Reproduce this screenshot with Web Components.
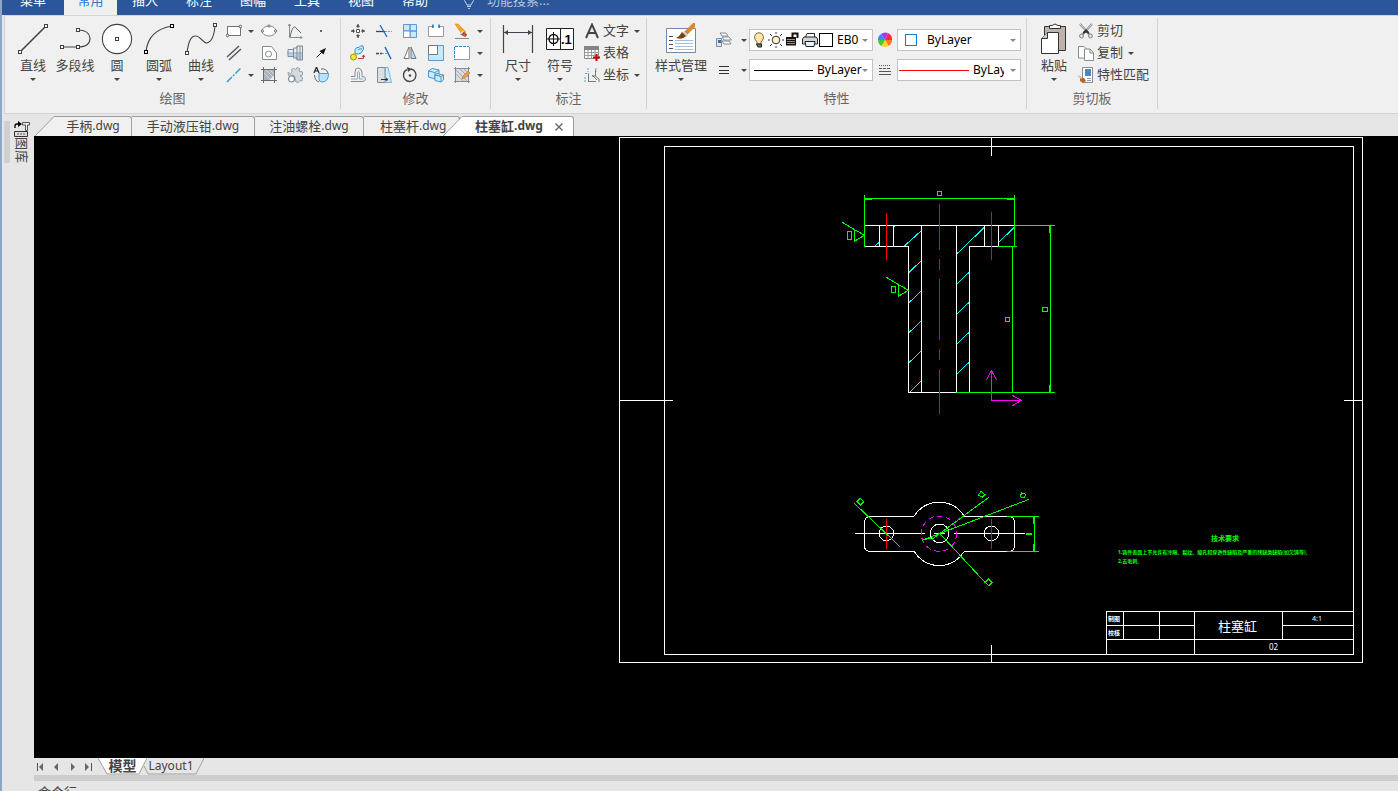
<!DOCTYPE html>
<html lang="zh-CN">
<head>
<meta charset="utf-8">
<title>CAD</title>
<style>
body{margin:0;font:13px/16px "Noto Sans","Noto Sans CJK SC",sans-serif;color:#444;background:#e6e6e6}
</style>
</head>
<body>
<cad-app></cad-app>
<script>
const pt=(x,y,c='#3b3f46')=>`<rect x="${x-1.5}" y="${y-1.5}" width="3" height="3" fill="#fff" stroke="${c}"/>`;
const D='#3f444c',G='#858b94',B='#3c8fd0',L='#c9ecff';
const ICONS={
line:[32,`<path d="M3 29L29 3" stroke="${D}" stroke-width="1.6"/>${pt(29,3)}${pt(3,29)}`],
pline:[32,`<path d="M3 24H19Q31 24 31 15Q30 7 19 7" fill="none" stroke="${D}" stroke-width="1.2"/>${pt(3,24)}${pt(19,24)}${pt(19,7)}`],
circle:[32,`<circle cx="16" cy="16" r="14.6" fill="#fff" stroke="${D}" stroke-width="1.1"/>${pt(16,16)}`],
arc:[32,`<path d="M3 29Q5 7 29 3" fill="none" stroke="${D}" stroke-width="1.2"/>${pt(29,3,'#000')}${pt(3,29,'#000')}`],
curve:[32,`<path d="M2 30Q4 12 11 13C15 13 18 20 22 20Q29 18 30 2" fill="none" stroke="${D}" stroke-width="1.1"/>${pt(30,2)}${pt(2,30)}`],
rect:[16,`<rect x="1.5" y="3.500" width="13" height="9" fill="#fff" stroke="#70757c"/><circle cx="14.500" cy="3.500" r="1.300" fill="#fff" stroke="${D}" stroke-width=".8"/><circle cx="1.500" cy="12.500" r="1.300" fill="#fff" stroke="${D}" stroke-width=".8"/>`],
dline:[16,`<path d="M1 12L13 1M3 15L15 4" stroke="#555a61" stroke-width="1.5"/>`],
cline:[16,`<path d="M1 15L15 1" stroke="#1e9fdc" stroke-width="1.4" stroke-dasharray="7 1.500 2 1.500"/>`],
ellipse:[16,`<ellipse cx="8" cy="8" rx="7" ry="5" fill="#fff" stroke="${G}"/><g fill="#fff" stroke="#444" stroke-width=".7"><circle cx="1.500" cy="8" r="1.100"/><circle cx="14.500" cy="8" r="1.100"/><circle cx="8" cy="3" r="1.100"/></g>`],
polyg:[16,`<path d="M1.500 1.500H10.500L15.500 8V14.500H1.500Z" fill="#fff" stroke="${G}"/><circle cx="7.500" cy="9" r="3" fill="#fff" stroke="${G}"/>`],
hatch:[16,`<path d="M2.500 2.500H13.500V8L8 13.500H2.500Z" fill="#aeb3b9"/><path d="M3 6L9 12M5 3L12 10M9 3L13 7" stroke="#dfe2e5" stroke-width=".7"/><path d="M2.500 0V16M13.500 0V16M0 2.500H16M0 13.500H16" stroke="#666c74"/>`],
graph:[16,`<path d="M2.500 1V14.500H15M1 3L2.500 1 4 3M13.500 13L15 14.500 13.500 16" fill="none" stroke="${G}"/><path d="M3 14C5 5 7 2 9 5L14 10" fill="none" stroke="#5c6168"/>`],
bolt:[16,`<path d="M1 4.500H6.500V3H10V1H15.500V15H10V13H6.500V11.500H1Z" fill="#e9edf2"/><path d="M1 9H15.500V15H10V13H6.500V11.500H1Z" fill="#b5d3ee"/><path d="M0 8H16" stroke="#6fa5d8"/><path d="M1 4.500H6.500V3H10V1H15.500V15H10V13H6.500V11.500H1ZM6.500 3V13M10 1V15M13 1V15" fill="none" stroke="${G}"/>`],
gear:[16,`<path d="M5 5L4.500 2.500 6.500 1 8.500 3 10 .500 12.500 1.500 12 4 15.500 5V8L13 9 15.500 10.500 15 14 12.500 13.500 11.500 15.500 9 15 8.500 12 7 8.500 3.500 8 1.500 8.500 1 5.500 3.500 6.500Z" fill="#d4dae2" stroke="#9aa1aa"/><circle cx="4.500" cy="12" r="3" fill="#fff" stroke="${G}" stroke-width="1.200"/>`],
dot:[16,`<rect x="7" y="7" width="2" height="2" fill="#666"/>`],
arrow:[16,`<path d="M3.500 12.500L9 7" stroke="#222" stroke-width="1"/><path d="M13 3L10.500 9.500 6.500 6Z" fill="#111"/>`],
aspin:[16,`<path d="M6 6.500H15.500Q15.500 15 9 15Q6 15 6 12Z" fill="#b9e2fa" stroke="#4d9bd0"/><path d="M1.500 8Q2 14 6 15M15 6Q13 1 8 2" fill="none" stroke="#666"/><path d="M1 6L3.500 0L6 6M2 4H5" fill="none" stroke="#222" stroke-width="1.200"/>`],
move:[16,`<path d="M6.500 6.500H9.500V9.500H6.500Z" fill="#fff" stroke="#555"/><path d="M1 8H5M11 8H15M8 1V5M8 11V15" stroke="${D}"/><path d="M1 8L4 6V10ZM15 8L12 6V10ZM8 1L6 4H10ZM8 15L6 12H10Z" fill="#555"/>`],
trim:[16,`<path d="M0 8.500H9" stroke="#445" stroke-width="1.300"/><path d="M9 8.500H16" stroke="#5da6e0" stroke-dasharray="2 1"/><path d="M4 2L11 14" stroke="#1f6fbf" stroke-width="1.300"/>`],
array:[16,`<g stroke="#5b9bd0"><path d="M1.500 1.500H8V8H1.500ZM8 1.500H14.500V8H8ZM8 8H14.500V14.500H8Z" fill="#c5eaff"/><path d="M1.500 8H8V14.500H1.500Z" fill="#fff"/></g>`],
brk:[16,`<path d="M4 3.500H.500V13.500H15.500V3.500H12" fill="#fff"/><path d="M4 3.500H.500V13.500H15.500V3.500H12" fill="none" stroke="#999"/><path d="M4 3.500H5.500M5 1.500V5M12 3.500H10.500M11 1.500V5" stroke="#1f6fbf" stroke-width="1.500"/>`],
eraser:[16,`<path d="M1 1L4 1 12 9 8.500 12Z" fill="#f5a623" stroke="#d98a1c" stroke-width=".6"/><path d="M9 8L13 11.500Q12.500 15 9 13L6 11Z" fill="#b0503a"/><path d="M9.500 8L6.500 11" stroke="#dfe5ea" stroke-width="1.500"/><path d="M1 15.500H15" stroke="#888"/>`],
copyobj:[16,`<circle cx="3.500" cy="12" r="3" fill="#ffe52d" stroke="#a88c00"/><path d="M5 6Q5 2 9 2.500Q10 0 13 1Q15 4 11 8Q8 9 7 9Q4 9 5 6Z" fill="${L}" stroke="${B}"/><path d="M8 5Q10 3 12 4" fill="none" stroke="${B}"/><path d="M8 13.500H13.500V10M12 12L13.500 10 15 12" fill="none" stroke="#b04030"/>`],
extend:[16,`<path d="M0 8.500H6" stroke="#445" stroke-width="1.500" stroke-dasharray="3 1"/><path d="M6 8.500H11" stroke="#5da6e0" stroke-dasharray="2 1"/><path d="M9 2L15 14" stroke="#1f6fbf" stroke-width="1.500"/>`],
mirror:[16,`<path d="M7 2V13.500H2Z" fill="#fff" stroke="#777"/><path d="M9 2V13.500H14Z" fill="#bcdcf5" stroke="#777"/>`],
scale:[16,`<path d="M.500 .500H15.500V15.500H.500Z" fill="#c5eaff" stroke="#5b9bd0"/><path d="M.500 .500H9.500V9.500H.500Z" fill="#fff" stroke="#777"/>`],
region:[16,`<path d="M.500 1.500H15.500V14.500H.500Z" fill="#fff"/><path d="M15.500 2V14.500H1" fill="none" stroke="#999"/><path d="M1 1.500H15M.500 2V15" stroke="${B}" stroke-dasharray="3 1"/>`],
offset:[16,`<path d="M1 14.500H12Q15.500 14.500 15.500 12Q15.500 9.500 12 9.500V5Q11 1 8 1Q5 1 5 5V9.500H1" fill="none" stroke="${G}"/><path d="M1 12H7.500V5Q8.500 3.500 9.500 5V12H13" fill="none" stroke="#69b5ec"/>`],
stretch:[16,`<path d="M9 .500H12L15.500 15.500H9Z" fill="${L}" stroke="#5b9bd0" stroke-width=".7"/><path d="M1.500 .500H9V15.500H1.500Z" fill="#dcdfe2" stroke="${G}"/><path d="M5 12.500H12M10 11L12 12.500 10 14" fill="none" stroke="#333"/>`],
rotate:[16,`<path d="M9 2A6.300 6.300 0 1 1 5 2.500" fill="none" stroke="#444" stroke-width="1.400"/><path d="M5 0L10 2 6 5Z" fill="#444"/><circle cx="8" cy="8.500" r="1.200" fill="#444"/>`],
solid:[16,`<g fill="${L}" stroke="#4b93c8"><path d="M.500 4L4 1.500 11 3V10L7 12 .500 10ZM.500 4L7 5.500 11 3M7 5.500V12"/><path d="M7 8L9 6.500 15.500 8V13L13 15 7 13.500ZM7 8L13 9.500 15.500 8M13 9.500V15"/></g>`],
hatchedit:[16,`<path d="M1.500 1.500H14.500V14.500H1.500Z" fill="#d8dadd" stroke="${G}"/><path d="M2 7L9 14M2 3L13 14M6 2L14 10M10 2L14 6" stroke="#9ba1a8" stroke-width=".8"/><path d="M0 1.500H16M0 14.500H16M1.500 0V16M14.500 0V16" stroke="${G}"/><path d="M8 12L9 9 14 4 16 6 11 11Z" fill="#f0a030" stroke="#a66" stroke-width=".5"/>`],
dim:[32,`<path d="M1.500 2V30M30.500 2V30M2 9.500H30" stroke="${D}" stroke-width="1.200"/><path d="M2 9.500L6 7V12ZM30 9.500L26 7V12Z" fill="${D}"/>`],
sym:[32,`<path d="M2.500 5.500H29.500V26.500H2.500ZM16.500 5.500V26.500" fill="#fff" stroke="#222"/><circle cx="9.500" cy="16" r="4.500" fill="none" stroke="#111" stroke-width="1.400"/><path d="M3 16H16M9.500 9V23" stroke="#111"/><text x="17" y="21" font-family="Liberation Sans" font-weight="bold" font-size="13" fill="#000">.1</text>`],
textA:[16,`<path d="M2 15L8 1.500 14 15M4.500 10H11.500" fill="none" stroke="#444" stroke-width="1.900"/>`],
table:[16,`<path d="M.500 1.500H14.500V13.500H.500Z" fill="#fff" stroke="#888"/><path d="M0 1H15V5H0Z" fill="#7d848c"/><path d="M0 7.500H15M0 10.500H15M4 5V13M7.500 5V13M11 5V13" stroke="#999"/><path d="M12.500 9V16M9 12.500H16" stroke="#c00" stroke-width="2"/>`],
coord:[16,`<path d="M4 1V5M12 1V5M1 6.500H5M1 10V15" stroke="#5aa0d0" stroke-dasharray="2 1"/><path d="M4.500 7V15M4 14.500H12M8 8L13 13M11.500 3V9L15 12V15M8 9H12" fill="none" stroke="#777"/>`],
style:[32,`<path d="M1.500 5.500H30.500V29.500H1.500Z" fill="#fff" stroke="#6f8aa8"/><path d="M4 13.500H8M4 17.500H8M4 21.500H8M4 25.500H8" stroke="#30507a"/><path d="M10 17.500H28M10 20.500H28M10 23.500H28M10 26.500H28" stroke="#a9bcd6" stroke-width="1.200"/><path d="M19 9L28 0H30V4L22 12Z" fill="#d7892f"/><path d="M19 8L23 12 21 14 17 10Z" fill="#cfd4da"/><path d="M17 9L21 13Q18 17 11 15Q15 13 17 9Z" fill="#774317"/>`],
layers:[16,`<path d="M4 1H10L12 4H6ZM6 5H13L15.500 8H8ZM6 9H13L15 12H8Z" fill="#fff" stroke="${G}"/><path d="M.500 6.500H5.500V14.500H.500Z" fill="#dbe7f2" stroke="${G}"/><rect x="2" y="8" width="3" height="3" fill="#3475b5"/>`],
lines:[16,`<path d="M3 4.500H13M3 8.500H13M3 11.500H13" stroke="#333"/>`],
bulb:[16,`<path d="M6 10Q2 6 4.500 2.500Q8 -1 11.500 2.500Q14 6 10 10V12H6Z" fill="#ffe9a8" stroke="#7b6540"/><path d="M5.500 12H10.500V15H7Z" fill="#777" stroke="#222"/>`],
sun:[16,`<circle cx="8" cy="8" r="3.800" fill="#fff3cf" stroke="#333"/><path d="M8 0V2M8 14V16M0 8H2M14 8H16M2 2L4 4M12 12L14 14M2 14L4 12M12 4L14 2" stroke="#333"/>`],
lock:[16,`<path d="M7.500 6V1.500H12.500V6" fill="none" stroke="#111" stroke-width="2"/><path d="M1 5H11V13.500H1Z" fill="#111"/><path d="M2 7.500H10M2 9.500H10M2 11.500H10" stroke="#a6a022"/>`],
printer:[16,`<path d="M3.500 5L5 1.500H12.500V5" fill="#fff" stroke="#222"/><path d="M2 5H14L15.500 7V12H.500V7Z" fill="#d3d6d9" stroke="#222"/><path d="M3 9.500H13L12 14.500H4Z" fill="#dff5fa" stroke="#222"/>`],
wheel:[16,`<path d="M8 8L1 8A7 7 0 0 1 4 2Z" fill="#388bff"/><path d="M8 8L4 2A7 7 0 0 1 11 1Z" fill="#9c3cff"/><path d="M8 8L11 1A7 7 0 0 1 15 8Z" fill="#f52b45"/><path d="M8 8L15 8A7 7 0 0 1 11.500 14Z" fill="#ff7d20"/><path d="M8 8L11.500 14A7 7 0 0 1 4.500 14Z" fill="#ffd52e"/><path d="M8 8L4.500 14A7 7 0 0 1 1 8Z" fill="#49c931"/>`],
ltype:[16,`<path d="M2 3.500H14" stroke="#555" stroke-dasharray="1 1"/><path d="M2 6.500H14" stroke="#555" stroke-dasharray="3 1"/><path d="M2 9.500H14M2 12.500H14" stroke="#555"/>`],
paste:[32,`<path d="M6.500 3.500H27.500V27.500H6.500Z" fill="#bdb3aa" stroke="#333"/><path d="M11.500 2.500H14Q17 -.500 20 2.500H22.500V5.500H11.500Z" fill="#fff" stroke="#333"/><path d="M9.500 9.500H20.500V30.500H3.500V15.500Z" fill="#fff" stroke="#333"/><path d="M9.500 9.500V15.500H3.500" fill="#ccc" stroke="#333"/>`],
cut:[16,`<path d="M2 1L12 12M14 1L4 12" stroke="${G}" stroke-width="2.200"/><path d="M2 1L12 12M14 1L4 12" stroke="#eee" stroke-width=".8"/><path d="M5 9L8 6 11 9V11L8 9.500 5 11Z" fill="#333"/><circle cx="3.500" cy="13" r="2" fill="#ddd" stroke="${G}"/><circle cx="12.500" cy="13" r="2" fill="#ddd" stroke="${G}"/>`],
copy:[16,`<path d="M.500 1.500H6L9 4.500V13H.500Z" fill="#fff" stroke="${G}"/><path d="M6.500 4H12L15.500 8V15.500H6.500Z" fill="#fff" stroke="${G}"/><path d="M12 4V8H15.500" fill="none" stroke="${G}"/>`],
match:[16,`<path d="M4.500 .500H14.500V15.500H4.500Z" fill="#fff" stroke="#889"/><path d="M7 2H13V9H7Z" fill="#4c87c0"/><path d="M9 11.500H13M9 13.500H13" stroke="#89a"/><path d="M2 10L6 11 8 14 5 16 2 14Z" fill="#b76425"/><path d="M0 9L4 11" stroke="#ccc" stroke-width="2"/>`],
tip:[16,`<path d="M5 10Q1 5 5 2Q8 0 11 2Q15 5 11 10L10 12H6Z" fill="none" stroke="#c3d0e8"/><path d="M6 13.500H10M7 15.500H9" stroke="#c3d0e8"/>`],
lib:[16,`<path d="M1 7V5Q1 3 3 3H5" fill="none" stroke="#000" stroke-width="1.300"/><path d="M4 0L8 3 4 6Z"/><path d="M8.500 1.500H15.500V4H13.500V9.500H11.500V4H8.500Z" fill="#eee" stroke="#555"/><path d="M.500 10.500H13.500V15.500H.500Z" fill="#ddd" stroke="#333"/><path d="M3 13H11" stroke="#555" stroke-dasharray="2 1"/>`],
close:[16,`<path d="M4.500 4.500L11.500 11.500M11.500 4.500L4.500 11.500" stroke="#666" stroke-width="1.400"/>`],
first:[16,`<path d="M3.500 4V12" stroke="#555"/><path d="M9 4V12L5 8Z" fill="#666"/>`],
prev:[16,`<path d="M8 4V12L4 8Z" fill="#666"/>`],next:[16,`<path d="M5 4V12L9 8Z" fill="#666"/>`],
last:[16,`<path d="M9.500 4V12" stroke="#555"/><path d="M3 4V12L7 8Z" fill="#666"/>`]
};
const make=(tag,fn)=>customElements.define(tag,class extends HTMLElement{
 connectedCallback(){if(this.shadowRoot)return;this.attachShadow({mode:'open'}).innerHTML=fn(this)}
});
const btn='button{font:inherit;color:inherit;background:none;border:0;padding:0;margin:0;display:flex;align-items:center;justify-content:center;white-space:nowrap}';

make('cad-icon',e=>{const [s,b]=ICONS[e.getAttribute('name')];
 return `<style>:host{display:block;flex:none}svg{display:block}</style><svg width="${s}" height="${s}" viewBox="0 0 ${s} ${s}" aria-hidden="true">${b}</svg>`});
make('drop-caret',()=>`<style>:host{display:block;flex:none;border:3px solid transparent;border-top-color:var(--caret,#444);border-bottom:0;width:0}</style>`);

make('big-tool',e=>`<style>:host{display:block;width:42px;flex:none}:host([wide]){width:56px}${btn}
button{flex-direction:column;width:100%;justify-content:flex-start;line-height:14px}
.i{height:38px;display:flex;align-items:center}drop-caret{margin-top:6px}</style>
<button><span class="i"><cad-icon name="${e.getAttribute('icon')}"></cad-icon></span><slot></slot>${e.hasAttribute('drop')?'<drop-caret></drop-caret>':''}</button>`);
make('mini-tool',e=>`<style>:host{display:block}${btn}button{width:100%;height:22px}</style>
<button aria-label="${e.getAttribute('label')}"><cad-icon name="${e.getAttribute('icon')}"></cad-icon></button>`);
make('caret-tool',e=>`<style>:host{display:block}${btn}button{width:100%;height:22px}</style><button aria-label="更多"><drop-caret></drop-caret></button>`);
make('row-tool',e=>`<style>:host{display:block}${btn}button{height:22px;gap:3px}span{padding-bottom:2px}drop-caret{margin-left:2px}</style>
<button><cad-icon name="${e.getAttribute('icon')}"></cad-icon><span><slot></slot></span>${e.hasAttribute('drop')?'<drop-caret></drop-caret>':''}</button>`);

make('ribbon-group',e=>`<style>:host{display:flex;flex-direction:column;box-sizing:border-box;border-right:1px solid #d4d4d4;margin:2px 0 4px;flex:none}
.t{display:flex;align-items:flex-start;box-sizing:border-box;height:69px;padding:2px 0 0 var(--pad,6px)}
.l{text-align:center;color:#666;margin-top:3px;line-height:16px;padding-bottom:3px}</style>
<div class="t"><slot></slot></div><div class="l">${e.getAttribute('label')}</div>`);
make('tool-grid',e=>`<style>:host{display:grid;grid-template-columns:${e.getAttribute('cols')};grid-auto-rows:22px}</style><slot></slot>`);

make('menu-bar',()=>`<style>:host{display:block;background:#2b579a;color:#fff;height:15px;overflow:hidden}
nav{display:flex;align-items:flex-end;height:15px}
a{flex:none;color:inherit;text-decoration:none;width:54px;height:28px;line-height:26px;text-align:center}
a:first-child{width:62px}a.on{background:#f0f0f0;color:#2b78d0;width:53px;margin-right:1px}
label{display:flex;align-items:center;gap:10px;height:28px;margin-left:19px}
input{border:0;background:none;font:inherit;width:160px;padding:0 0 2px;color:#fff}input::placeholder{color:#b3c3de;opacity:1}</style>
<nav><a href="#">菜单</a><a href="#" class="on">常用</a><a href="#">插入</a><a href="#">标注</a><a href="#">图幅</a><a href="#">工具</a><a href="#">视图</a><a href="#">帮助</a>
<label><cad-icon name="tip"></cad-icon><input type="search" aria-label="功能搜索" placeholder="功能搜索..."></label></nav>`);

make('prop-combo',e=>`<style>:host{display:flex;align-items:center;box-sizing:border-box;width:124px;height:22px;border:1px solid #c3c3c3;background:#fff;padding:0 4px 0 1px;--caret:#888}
select{appearance:none;border:0;padding:0;margin:0 0 0 4px;background:none;flex:1;min-width:0;font:12px/20px "Noto Sans","Noto Sans CJK SC",sans-serif;color:#000;height:20px}
:host([clip]) select{margin-right:6px}
::slotted(cad-icon){margin-right:1px}</style><slot></slot><select aria-label="${e.getAttribute('label')}"><option>${e.getAttribute('value')}</option></select><drop-caret></drop-caret>`);
make('line-swatch',()=>`<style>:host{display:block;flex:none;width:var(--w);height:1px;background:var(--c);margin-left:var(--m)}</style>`);
make('box-swatch',()=>`<style>:host{display:block;flex:none;box-sizing:border-box;width:var(--w);height:var(--w);border:1px solid var(--c);background:#fff;margin:0 var(--m)}</style>`);

make('cad-ribbon',()=>{
const m=(i,l)=>`<mini-tool icon="${i}" label="${l}"></mini-tool>`,c='<caret-tool></caret-tool>',s='<span></span>';
return `<style>:host{display:flex;background:#f0f0f0;border:1px solid #d4d4d4;border-right:0;margin-left:2px;overflow:hidden}
.g1{--pad:7px;width:336px}.g2{--pad:4px;width:150px}.g3{width:156px}.g4{width:380px}.g5{width:131px}
.list{display:block;margin-left:3px}
.props{display:grid;grid-template-columns:30px 10px 124px 24px 124px;row-gap:8px;padding-top:9px;align-items:center}</style>
<ribbon-group class="g1" label="绘图"><big-tool icon="line" drop>直线</big-tool><big-tool icon="pline">多段线</big-tool><big-tool icon="circle" drop>圆</big-tool><big-tool icon="arc" drop>圆弧</big-tool><big-tool icon="curve" drop>曲线</big-tool>
<tool-grid cols="24px 10px 26px 26px 26px">${m('rect','矩形')+c+m('ellipse','椭圆')+m('graph','公式曲线')+m('dot','点')+m('dline','平行线')+s+m('polyg','轮廓')+m('bolt','孔轴')+m('arrow','箭头')+m('cline','中心线')+c+m('hatch','剖面线')+m('gear','齿轮')+m('aspin','局部放大')}</tool-grid></ribbon-group>
<ribbon-group class="g2" label="修改"><tool-grid cols="26px 26px 26px 26px 26px 10px">${m('move','平移')+m('trim','裁剪')+m('array','阵列')+m('brk','打断')+m('eraser','删除')+c+m('copyobj','平移复制')+m('extend','延伸')+m('mirror','镜像')+m('scale','缩放')+m('region','分解')+c+m('offset','等距')+m('stretch','拉伸')+m('rotate','旋转')+m('solid','块')+m('hatchedit','编辑剖面线')+c}</tool-grid></ribbon-group>
<ribbon-group class="g3" label="标注"><big-tool icon="dim" drop>尺寸</big-tool><big-tool icon="sym" drop>符号</big-tool><div class="list"><row-tool icon="textA" drop>文字</row-tool><row-tool icon="table">表格</row-tool><row-tool icon="coord" drop>坐标</row-tool></div></ribbon-group>
<ribbon-group class="g4" label="特性"><big-tool icon="style" drop wide>样式管理</big-tool>
<div class="props">${m('layers','图层')+c}<prop-combo label="图层" value="EB0"><cad-icon name="bulb"></cad-icon><cad-icon name="sun"></cad-icon><cad-icon name="lock"></cad-icon><cad-icon name="printer"></cad-icon><box-swatch style="--w:14px;--c:#000;--m:0px"></box-swatch></prop-combo>${m('wheel','颜色')}<prop-combo label="颜色" value="ByLayer"><box-swatch style="--w:12px;--c:#1a78d6;--m:6px"></box-swatch></prop-combo>
${m('lines','线宽')+c}<prop-combo label="线宽" value="ByLayer"><line-swatch style="--w:59px;--c:#000;--m:3px"></line-swatch></prop-combo>${m('ltype','线型')}<prop-combo clip label="线型" value="ByLayer"><line-swatch style="--w:70px;--c:#f00;--m:0px"></line-swatch></prop-combo></div></ribbon-group>
<ribbon-group class="g5" label="剪切板"><big-tool icon="paste" drop>粘贴</big-tool><div class="list"><row-tool icon="cut">剪切</row-tool><row-tool icon="copy" drop>复制</row-tool><row-tool icon="match">特性匹配</row-tool></div></ribbon-group>`});

make('doc-tab',e=>{const sl=e.hasAttribute('slant'),on=e.hasAttribute('active');
return `<style>:host{display:flex;height:20px;flex:none;position:relative;--bg:${on?'#fff':'#f0f0f0'}}
svg{display:block;flex:none}${btn}.b{display:flex;align-items:center;border-top:1px solid #a0a0a0;border-right:1px solid #a0a0a0;border-top-right-radius:3px;background:var(--bg);box-sizing:border-box;height:20px;flex:1;min-width:0;justify-content:${on?'flex-start':'center'};padding:0 8px 0 ${on?'12px':'8px'};gap:8px;${on?'font-weight:bold;':''}}
.n{padding-bottom:2px}
span{font-size:12px}:host([last]) .b{padding-right:0;justify-content:flex-start;padding-left:16px}.x{width:16px}</style>
${sl?'<svg width="20" height="20"><path d="M0 20L20 0V20Z" fill="var(--bg)"/><path d="M0 20L19 .5H20" fill="none" stroke="#a0a0a0"/></svg>':''}
<div class="b"><button class="n"><slot></slot><span>.dwg</span></button>${on?'<button class="x" aria-label="关闭"><cad-icon name="close"></cad-icon></button>':''}</div>`});
make('doc-tabs',()=>`<style>:host{display:flex;align-items:flex-end;height:22px;padding-left:1px}
.a{width:97px}.b{width:123px}.c{width:109px}.d{width:96px}.e{width:131px;margin-left:-17px}</style>
<doc-tab class="a" slant>手柄</doc-tab><doc-tab class="b">手动液压钳</doc-tab><doc-tab class="c">注油螺栓</doc-tab><doc-tab class="d" last>柱塞杆</doc-tab><doc-tab class="e" slant active>柱塞缸</doc-tab>`);

make('side-dock',()=>`<style>:host{display:flex;align-items:flex-start;width:32px;flex:none;padding-top:7px;box-sizing:border-box}
i{width:6px;height:42px;background:#d0d0d0;margin:0 4px 0 2px}${btn}button{flex-direction:column}
span{writing-mode:vertical-rl;text-orientation:sideways;line-height:14px}</style>
<i></i><button><cad-icon name="lib"></cad-icon><span>图库</span></button>`);

make('drawing-canvas',()=>`<style>:host{display:block;background:#000;flex:1;min-height:0;overflow:hidden}
svg{display:block}
.w{stroke:#fff}.g{stroke:#0f0}.c{stroke:#0ff}.r{stroke:#f00}.m{stroke:#f0f}
path,circle{fill:none;shape-rendering:crispEdges}.z{stroke-width:3}
text{font-family:"Noto Sans","Noto Sans CJK SC",sans-serif}.b{font-weight:bold}</style>
<svg width="1364" height="622" viewBox="34 136 1364 622">
<path class="w" d="M619.5 137.5H1362.500V662.500H619.500ZM664.500 146.500H1353.500V654.500H664.500ZM991.500 137V156M991.500 645V662M619 400.500H673M1344 400.500H1362"/>
<path class="w" d="M1353 611.500H1106.500V654M1123.500 611V639M1159.500 611V639M1194.500 611V654M1282.500 611V639M1106 625.500H1194M1282 625.500H1353M1106 639.500H1353"/>
<g fill="#fff"><text class="b" x="1108" y="621" font-size="6">制图</text><text class="b" x="1108" y="635" font-size="6">校核</text><text x="1218" y="631" font-size="13">柱塞缸</text><text x="1312" y="621" font-size="7">4:1</text><text x="1269" y="650" font-size="8">02</text></g>
<g fill="#0f0" class="b"><text x="1211" y="541" font-size="7">技术要求</text><text x="1118" y="554" font-size="5">1.铸件表面上不允许有冷隔、裂纹、缩孔和穿透性缺陷及严重的残缺类缺陷(如欠铸等)。</text><text x="1118" y="563" font-size="5">2.去毛刺。</text></g>
<svg class="z" x="830" y="180" width="240" height="240" viewBox="0 0 720 720">
<path class="c" d="M237 277L273 243M237 368L273 333M237 458L273 423M237 548L273 513M240 637L273 603M380 222L463 142M380 313L417 277M380 403L417 367M380 493L417 457M380 583L417 547M222 199L273 153M133 199L148 187M190 140L197 136M506 187L553 142"/>
<path class="w" d="M104 136H554M104 199H235.500V637M148.500 136V199M190.500 136V199M274.500 136V637M379.500 136V637M463.500 136V199M505.500 136V199M505 199H418.500V637M235 637H380"/>
<path class="g" d="M103.500 45V200M553.500 45V199M104 55.500H554M104 58.500H126M531 58.500H554M553 136H675M505 199H561M547.500 199V637M661.500 136V637M658.500 138V159M658.500 615V636M378 637H675M322 34H335V47H322ZM526 412H539V425H526ZM637 382H653V395H637ZM52 154H65V179H52ZM184 319H197V338H184ZM37 127L103 166L73 184V149M169 292L235 331L205 349V313"/>
<path class="r" d="M169.500 99V240M328.500 72V210M328.500 237V270M328.500 297V480M328.500 507V540M328.500 567V702M484.500 96V240"/>
<path class="m" d="M484.500 661V571M469 600L484.500 572L500 600M484 661H575M547 646L574 661L547 677"/></svg>
<svg class="z" x="840" y="480" width="220" height="120" viewBox="0 0 660 360">
<path class="w" d="M45 160H255M282 160H315M342 160H555M222 109A88 88 0 0 1 373 109H507Q523 111 523 125V199Q522 214 507 214H373A88 88 0 0 1 222 214H90Q74 213 74 199V125Q75 110 90 109Z"/>
<circle class="w" cx="139" cy="160" r="22"/><circle class="w" cx="454" cy="160" r="22"/><circle class="w" cx="299" cy="160" r="28"/>
<circle class="m" cx="297" cy="161" r="53" stroke-dasharray="16 11"/>
<path class="r" d="M139.500 117V207M454.500 117V207"/>
<path class="g" d="M43 70L180 200M276 178L446 52M246 181L567 58M299 160L435 307M51 65L61 55L71 65L61 75ZM414 45L424 34L435 44L427 52ZM541 48L545 39L557 43L553 52L543 51ZM435 307L446 297L456 307L446 317ZM501 109H597M501 214H597M583.500 109V214M580.500 111V132M580.500 192V213M558 160H575M558 163H575M246 181L272 174M276 178L299 160"/></svg>
</svg>`);

make('sheet-tabs',()=>`<style>:host{display:flex;height:17px;align-items:flex-start;color:#444}
${btn}.n{width:16px;height:17px}.s{display:flex;position:relative}.s svg{position:absolute;inset:0}.s button{position:relative;height:16px;width:100%}
.m{width:49px;font-weight:bold;font-size:14px}.l{width:61px;font-size:12px;margin-left:-4px}.l button{width:56px}</style>
<button class="n" aria-label="首页"><cad-icon name="first"></cad-icon></button><button class="n" aria-label="上一页"><cad-icon name="prev"></cad-icon></button><button class="n" aria-label="下一页"><cad-icon name="next"></cad-icon></button><button class="n" aria-label="末页"><cad-icon name="last"></cad-icon></button>
<div class="s m"><svg width="49" height="17"><path d="M0 0L9 16H41L49 0" fill="#fff" stroke="#a0a0a0"/></svg><button>模型</button></div>
<div class="s l"><svg width="61" height="17"><path d="M1 8L5 16H53L61 0" fill="none" stroke="#a0a0a0"/></svg><button>Layout1</button></div>`);
make('command-panel',()=>`<style>:host{display:block;border-top:6px solid #cdcdcd;height:10px;overflow:hidden;padding-left:4px;line-height:22px}</style>命令行`);

make('cad-app',()=>`<style>:host{display:flex;flex-direction:column;height:100vh;box-sizing:border-box;border-left:2px solid #8fa6c4;overflow:hidden}
.work{display:flex;flex:1;min-height:0}.main{display:flex;flex-direction:column;flex:1;min-width:0}</style>
<menu-bar></menu-bar><cad-ribbon></cad-ribbon><div class="work"><side-dock></side-dock><div class="main"><doc-tabs></doc-tabs><drawing-canvas></drawing-canvas><sheet-tabs></sheet-tabs><command-panel></command-panel></div></div>`);
</script>
</body>
</html>
